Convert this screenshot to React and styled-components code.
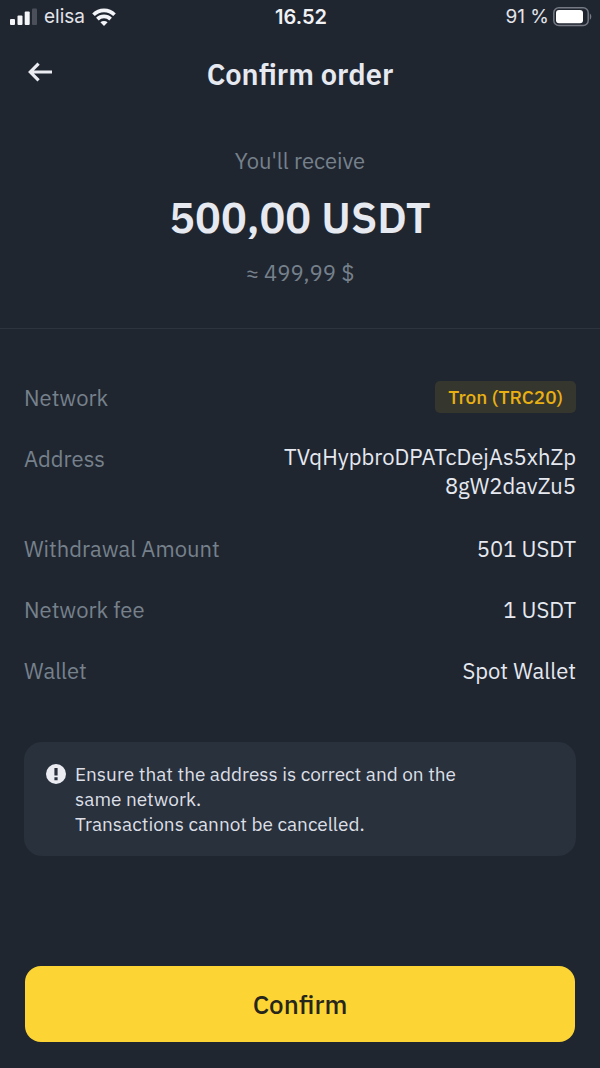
import React from "react";
import styled, { createGlobalStyle } from "styled-components";

const GlobalStyle = createGlobalStyle`
  *, *::before, *::after { box-sizing: border-box; }
  body { margin: 0; background: #202630; }
  h1, p, dl, dd, dt { margin: 0; }
`;

const Screen = styled.div`
  min-height: 100vh;
  display: flex;
  flex-direction: column;
  background: #202630;
  color: #e6e9f0;
  font-family: "IBM Plex Sans", Roboto, sans-serif;
  font-size: 22px;
  line-height: 34px;
`;

const StatusBar = styled.div`
  display: grid;
  grid-template-columns: 1fr auto 1fr;
  align-items: center;
  height: 34px;
  padding: 0 8px 0 10px;
  color: #e2e4ea;
  font-family: Inter, sans-serif;
  font-size: 19px;
  line-height: 24px;
`;

const StatusGroup = styled.div`
  display: flex;
  align-items: center;
  justify-content: ${({ $end }) => ($end ? "flex-end" : "flex-start")};
  gap: ${({ $end }) => ($end ? "4px" : "7px")};
`;

const Clock = styled.time`
  color: #f0f1f5;
  font-size: 20px;
  font-weight: 600;
`;

const Header = styled.header`
  display: grid;
  grid-template-columns: 32px 1fr 32px;
  align-items: center;
  height: 80px;
  padding: 0 24px;
`;

const BackButton = styled.button`
  display: flex;
  width: 32px;
  height: 32px;
  padding: 0;
  border: 0;
  background: none;
  color: #eaecf2;
`;

const Title = styled.h1`
  font-size: 29px;
  line-height: 36px;
  font-weight: 600;
  text-align: center;
`;

const Summary = styled.section`
  display: flex;
  flex-direction: column;
  align-items: center;
  padding: 30px 24px 38px;
  border-bottom: 1px solid #2d343e;
`;

const Muted = styled.p`
  color: #76818c;
`;

const Amount = styled.p`
  margin: 11px 0;
  font-size: 43px;
  line-height: 56px;
  font-weight: 600;
`;

const Details = styled.dl`
  display: flex;
  flex-direction: column;
  gap: 27px;
  padding: 52px 24px 0;
`;

const Row = styled.div`
  display: flex;
  justify-content: space-between;
  align-items: flex-start;
`;

const Label = styled.dt`
  color: #76818c;
`;

const Value = styled.dd`
  text-align: right;
`;

const Address = styled(Value)`
  width: 300px;
  padding-bottom: 5px;
  line-height: 29px;
  word-break: break-all;
`;

const Tag = styled(Value)`
  padding: 0 13px;
  border-radius: 5px;
  background: #35362e;
  color: #e8b012;
  font-size: 19px;
  line-height: 32px;
  font-weight: 500;
`;

const Notice = styled.div`
  display: flex;
  gap: 9px;
  margin: 54px 24px 0;
  padding: 20px 96px 19px 22px;
  border-radius: 18px;
  background: #29313c;
  color: #dcdfe6;
  font-size: 19px;
  line-height: 25px;
`;

const NoticeIcon = styled.svg`
  flex: none;
  margin-top: 2px;
`;

const Footer = styled.footer`
  display: flex;
  margin-top: auto;
  padding: 32px 25px 26px;
`;

const ConfirmButton = styled.button`
  flex: 1;
  height: 76px;
  border: 0;
  border-radius: 16px;
  background: #fcd535;
  color: #27261c;
  font: inherit;
  font-size: 26px;
  font-weight: 500;
`;

const SignalIcon = () => (
  <svg width="27" height="18" viewBox="0 0 27 18" aria-hidden="true">
    <g fill="#f4f5f8">
      <rect x="0" y="11" width="5" height="6" rx="1" />
      <rect x="7.500" y="7.500" width="5" height="9.500" rx="1" />
      <rect x="14.700" y="3.500" width="5" height="13.500" rx="1" />
    </g>
    <rect x="22" y="0.500" width="5" height="16.500" rx="1" fill="#4a4f5a" />
  </svg>
);

const WifiIcon = () => (
  <svg width="24" height="18" viewBox="0 0 24 18" aria-hidden="true">
    <g fill="none" stroke="#f4f5f8" strokeWidth="3.700">
      <path d="M1.500 6.700a14.900 14.900 0 0 1 21 0" />
      <path d="M5.400 11.100a9.300 9.300 0 0 1 13.200 0" />
    </g>
    <path d="M8.400 14.300a5.300 5.300 0 0 1 7.200 0L12 18Z" fill="#f4f5f8" />
  </svg>
);

const BatteryIcon = () => (
  <svg width="39" height="20" viewBox="0 0 39 20" aria-hidden="true">
    <rect x="0.800" y="0.800" width="34.400" height="17.600" rx="5" fill="none" stroke="#747983" strokeWidth="1.500" />
    <rect x="3" y="3" width="27" height="13.200" rx="3" fill="#fff" />
    <path d="M36.800 6.500c2 1 2 5.200 0 6.200Z" fill="#747983" />
  </svg>
);

const BackIcon = () => (
  <svg width="32" height="32" viewBox="0 0 32 32" fill="none" stroke="currentColor" strokeWidth="3.200" aria-hidden="true">
    <path d="M28 14H6.500M14.600 5.600 6.300 14l8.300 8.400" />
  </svg>
);

const details = [
  { label: "Network", value: "Tron (TRC20)", as: Tag },
  { label: "Address", value: "TVqHypbroDPATcDejAs5xhZp8gW2davZu5", as: Address },
  { label: "Withdrawal Amount", value: "501 USDT", as: Value },
  { label: "Network fee", value: "1 USDT", as: Value },
  { label: "Wallet", value: "Spot Wallet", as: Value },
];

export default function App() {
  return (
    <Screen>
      <GlobalStyle />
      <StatusBar>
        <StatusGroup>
          <SignalIcon />
          <span>elisa</span>
          <WifiIcon />
        </StatusGroup>
        <Clock>16.52</Clock>
        <StatusGroup $end>
          <span>91 %</span>
          <BatteryIcon />
        </StatusGroup>
      </StatusBar>
      <Header>
        <BackButton aria-label="Back">
          <BackIcon />
        </BackButton>
        <Title>Confirm order</Title>
      </Header>
      <Summary>
        <Muted>You'll receive</Muted>
        <Amount>500,00 USDT</Amount>
        <Muted>≈ 499,99 $</Muted>
      </Summary>
      <Details>
        {details.map(({ label, value, as: Cell }) => (
          <Row key={label}>
            <Label>{label}</Label>
            <Cell>{value}</Cell>
          </Row>
        ))}
      </Details>
      <Notice>
        <NoticeIcon width="20" height="20" viewBox="0 0 20 20" aria-hidden="true">
          <circle cx="10" cy="10" r="10" fill="#eaecf2" />
          <path d="M8.400 4h3.200v7.600H8.400ZM8.400 13.300h3.200v2.900H8.400Z" fill="#2a313c" />
        </NoticeIcon>
        <p>
          Ensure that the address is correct and on the same network.
          <br />
          Transactions cannot be cancelled.
        </p>
      </Notice>
      <Footer>
        <ConfirmButton>Confirm</ConfirmButton>
      </Footer>
    </Screen>
  );
}
